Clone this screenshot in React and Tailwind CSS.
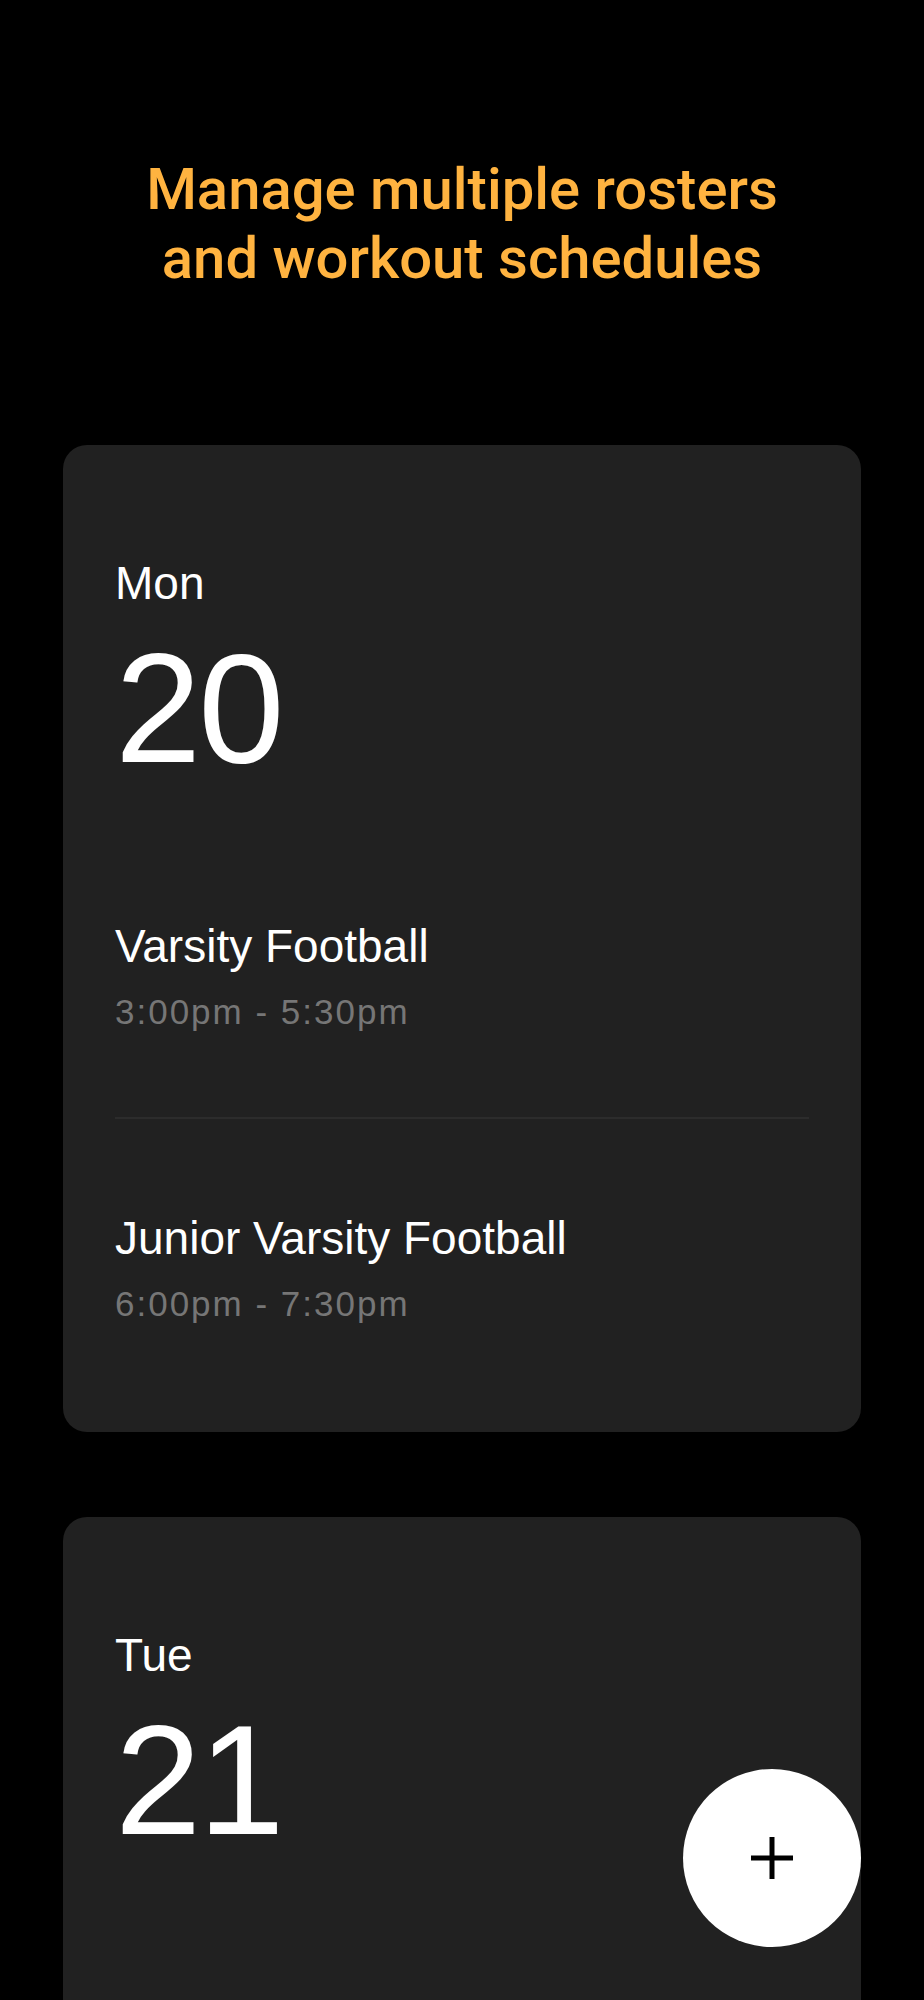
import React from 'react';

const days = [
  {
    day: 'Mon',
    date: '20',
    events: [
      { name: 'Varsity Football', time: '3:00pm - 5:30pm' },
      { name: 'Junior Varsity Football', time: '6:00pm - 7:30pm' },
    ],
  },
  {
    day: 'Tue',
    date: '21',
    events: [],
  },
];

const DayCard = ({ day, date, events }) => (
  <div className="bg-[#212121] rounded-[24px] pt-[115px] pb-[111px] px-[52px] min-h-[600px]">
    <div className="text-[46px] leading-none text-white">{day}</div>
    <div className="mt-[25px] text-[155px] leading-none text-white tracking-[-3px]">{date}</div>
    {events.length > 0 && (
      <div className="mt-[137px]">
        {events.map((ev, i) => (
          <div key={i}>
            {i > 0 && <div className="h-[2px] bg-[#2c2c2c] mt-[88px] mb-[96px]" />}
            <div className="text-[46px] leading-none text-white">{ev.name}</div>
            <div className="mt-[25px] text-[35px] leading-none text-[#767676] tracking-[2px]">
              {ev.time}
            </div>
          </div>
        ))}
      </div>
    )}
  </div>
);

const App = () => {
  return (
    <div
      className="relative h-[2000px] overflow-hidden bg-black"
      style={{ fontFamily: '"Liberation Sans", Arial, sans-serif' }}
    >
      <h1
        className="pt-[155px] text-center text-[58px] leading-[69px] text-[#FFB340] font-medium"
        style={{ fontFamily: 'Roboto, "Liberation Sans", sans-serif' }}
      >
        Manage multiple rosters
        <br />
        and workout schedules
      </h1>

      <div className="mt-[152px] px-[63px] flex flex-col gap-[85px]">
        {days.map((d) => (
          <DayCard key={d.day} {...d} />
        ))}
      </div>

      <button className="absolute right-[63px] bottom-[53px] w-[178px] h-[178px] rounded-full bg-white flex items-center justify-center">
        <svg width="42" height="42" viewBox="0 0 42 42">
          <line x1="0" y1="21" x2="42" y2="21" stroke="black" strokeWidth="5" />
          <line x1="21" y1="0" x2="21" y2="42" stroke="black" strokeWidth="5" />
        </svg>
      </button>
    </div>
  );
};

export default App;
